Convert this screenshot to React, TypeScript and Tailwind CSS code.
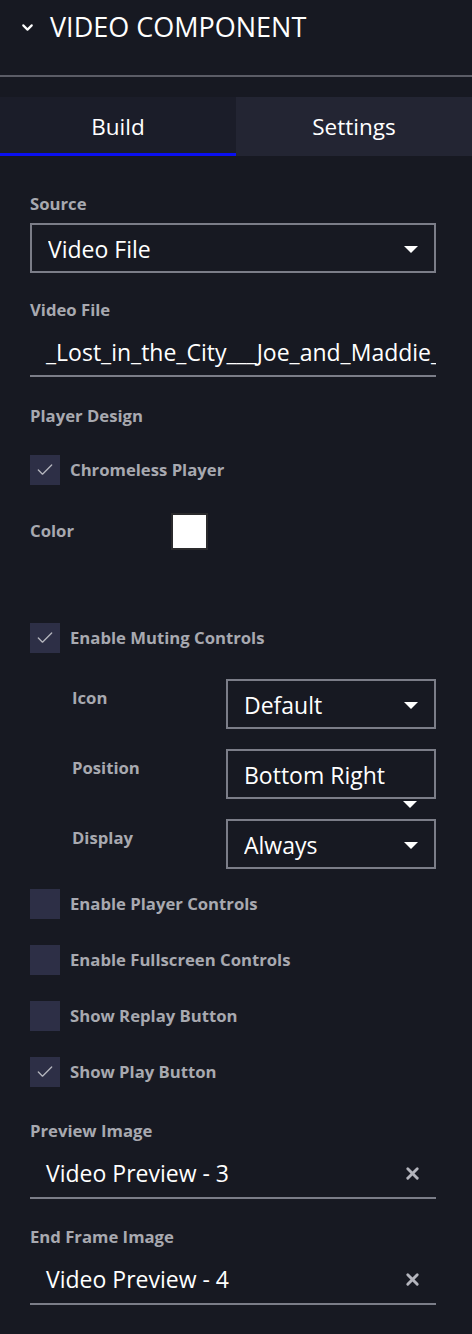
import { Check, ChevronDown, X } from "lucide-react";

const font = { fontFamily: '"Open Sans", "Noto Sans", sans-serif' };

function Caret() {
  return (
    <span className="block h-0 w-0 border-x-[7px] border-t-[7px] border-x-transparent border-t-white" />
  );
}

function Label({ children }: { children: React.ReactNode }) {
  return (
    <div className="h-[22px] text-[16.7px] leading-[22px] font-bold text-[#a8a9b0]">
      {children}
    </div>
  );
}

function Select({
  value,
  caretBelow = false,
  className = "",
}: {
  value: string;
  caretBelow?: boolean;
  className?: string;
}) {
  return (
    <div
      className={`relative flex h-[50px] items-center border-2 border-[#7b7d88] pt-[3px] pl-[16px] pr-[16px] ${className}`}
    >
      <span className="flex-1 truncate text-[23px] text-white">{value}</span>
      {caretBelow ? (
        <span className="absolute right-[17px] bottom-[-11px]">
          <Caret />
        </span>
      ) : (
        <Caret />
      )}
    </div>
  );
}

function Checkbox({ checked, label }: { checked: boolean; label: string }) {
  return (
    <div className="flex h-[30px] items-center gap-[10px]">
      <span className="flex h-[30px] w-[30px] items-center justify-center bg-[#2d2f46]">
        {checked && <Check size={20} strokeWidth={1.6} className="text-[#b4b5bd]" />}
      </span>
      <span className="text-[16.7px] font-bold text-[#a8a9b0]">{label}</span>
    </div>
  );
}

function ImageField({ value }: { value: string }) {
  return (
    <div className="mt-[7px] flex h-[50px] items-center border-b-2 border-[#7b7d88] pl-[16px] pr-[14px]">
      <span className="flex-1 text-[23px] text-white">{value}</span>
      <X size={19} strokeWidth={3.6} className="text-[#b4b5bd]" />
    </div>
  );
}

const mutingRows = [
  { label: "Icon", value: "Default" },
  { label: "Position", value: "Bottom Right", caretBelow: true },
  { label: "Display", value: "Always" },
];

export default function App() {
  return (
    <div style={font} className="min-h-screen w-[472px] bg-[#171922] pb-[30px]">
      <div className="flex h-[55px] items-center gap-[14px] pl-[19px]">
        <ChevronDown size={17} strokeWidth={3} className="text-white" />
        <span className="text-[27px] text-white">VIDEO COMPONENT</span>
      </div>
      <div className="mt-[20px] h-[2px] bg-[#5b5c66]" />

      <div className="mt-[20px] grid grid-cols-2">
        <div className="flex h-[59px] items-center justify-center border-b-[3px] border-[#0a10f0] bg-[#1b1d29] pt-[3px] text-[22.5px] text-white">
          Build
        </div>
        <div className="flex h-[59px] items-center justify-center bg-[#232533] text-[22.5px] text-white">
          Settings
        </div>
      </div>

      <div className="pl-[30px] pr-[36px]">
        <div className="mt-[37px]">
          <Label>Source</Label>
        </div>
        <Select className="mt-[8px]" value="Video File" />

        <div className="mt-[26px]">
          <Label>Video File</Label>
        </div>
        <div className="mt-[8px] flex h-[48px] items-center overflow-hidden border-b-2 border-[#7b7d88] pl-[16px]">
          <span className="whitespace-nowrap text-[23px] text-white">
            _Lost_in_the_City___Joe_and_Maddie_
          </span>
        </div>

        <div className="mt-[28px]">
          <Label>Player Design</Label>
        </div>
        <div className="mt-[28px]">
          <Checkbox checked label="Chromeless Player" />
        </div>

        <div className="mt-[28px] flex h-[36px] items-center">
          <span className="w-[141px] text-[16.7px] font-bold text-[#a8a9b0]">Color</span>
          <span className="h-[37px] w-[37px] border-2 border-[#2a2a2c] bg-white" />
        </div>

        <div className="mt-[74px]">
          <Checkbox checked label="Enable Muting Controls" />
        </div>

        <div className="mt-[26px] flex flex-col gap-[20px]">
          {mutingRows.map((row) => (
            <div key={row.label} className="flex items-start">
              <span className="mt-[6px] w-[196px] pl-[42px] text-[16.7px] font-bold text-[#a8a9b0]">
                {row.label}
              </span>
              <Select className="flex-1" value={row.value} caretBelow={row.caretBelow} />
            </div>
          ))}
        </div>

        <div className="mt-[20px] flex flex-col gap-[26px]">
          <Checkbox checked={false} label="Enable Player Controls" />
          <Checkbox checked={false} label="Enable Fullscreen Controls" />
          <Checkbox checked={false} label="Show Replay Button" />
          <Checkbox checked label="Show Play Button" />
        </div>

        <div className="mt-[33px]">
          <Label>Preview Image</Label>
        </div>
        <ImageField value="Video Preview - 3" />

        <div className="mt-[27px]">
          <Label>End Frame Image</Label>
        </div>
        <ImageField value="Video Preview - 4" />
      </div>
    </div>
  );
}
